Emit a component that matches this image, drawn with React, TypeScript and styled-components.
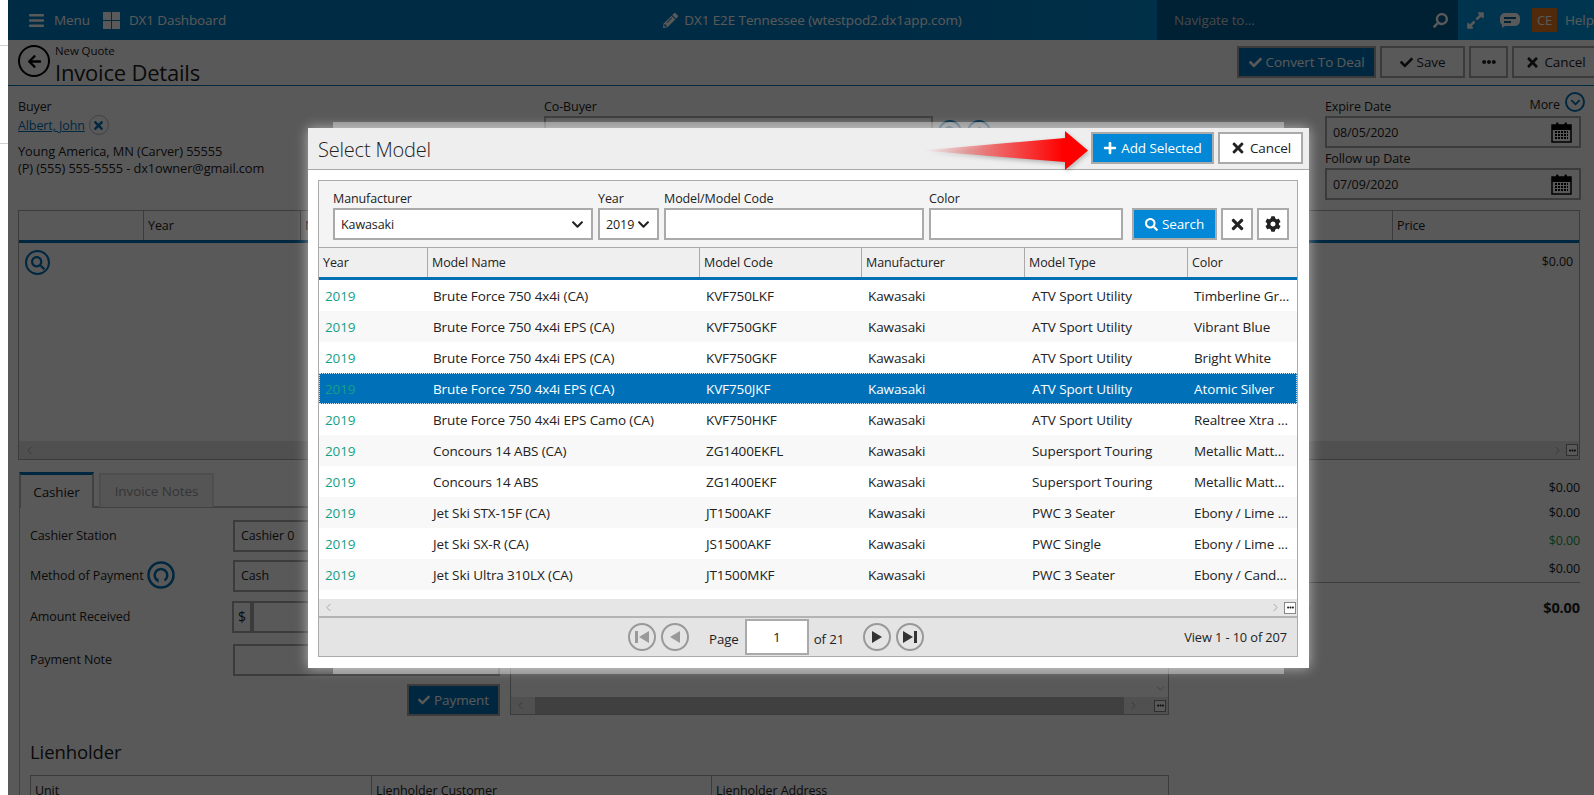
import React from "react";
import styled, { createGlobalStyle } from "styled-components";
import { FaBars, FaPencilAlt, FaSearch, FaExpandAlt, FaCheck, FaTimes, FaPlus, FaCog, FaEllipsisH, FaChevronDown, FaArrowLeft } from "react-icons/fa";
import { ChevronLeft, ChevronRight, ChevronDown } from "lucide-react";

const Global = createGlobalStyle`
  html, body { margin: 0; padding: 0; background: #fff; overflow: hidden; }
  * { box-sizing: border-box; }
  body { font-family: "Open Sans", "Noto Sans", sans-serif; font-size: 12.5px; color: #222; letter-spacing: -0.1px; }
`;

const Shell = styled.div`position: relative; width: 1594px; height: 795px; overflow: hidden; display: flex; background: #fff;`;
const Gutter = styled.div`width: 8px; flex: none; display: flex; flex-direction: column;`;
const GutterCell = styled.div<{ $h: number }>`height: ${p => p.$h}px; border-bottom: 1px solid #d0d0d0;`;
const Page = styled.div`flex: 1; min-width: 0; display: flex; flex-direction: column; background: #fff;`;

const TopBar = styled.header`height: 40px; flex: none; display: flex; align-items: center; color: #fff; background: linear-gradient(90deg, #007cc2 0%, #007cc2 55%, #0098e6 100%); font-size: 13.5px;`;
const TopLeft = styled.div`width: 460px; flex: none; display: flex; align-items: center; padding-left: 20px; gap: 9px;`;
const TopItem = styled.span`margin-right: 4px;`;
const TopCenter = styled.div`flex: 1; display: flex; justify-content: center; align-items: center; gap: 6px; font-size: 13.5px;`;
const NavSearch = styled.div`width: 301px; height: 40px; flex: none; display: flex; align-items: center; justify-content: space-between; padding: 0 10px 0 17px; background: #005f96; color: #ccc;`;
const TopRight = styled.div`width: 136px; flex: none; display: flex; align-items: center; padding-left: 8px; gap: 15px; white-space: nowrap;`;
const Avatar = styled.span`width: 25px; height: 24px; flex: none; display: flex; align-items: center; justify-content: center; background: #e87722; margin-left: -3px; margin-right: -7px; font-size: 13px;`;

const SubHeader = styled.div`height: 46px; flex: none; display: flex; justify-content: space-between; align-items: flex-start; padding: 6px 0 0 10px; border-bottom: 1px solid #0071b8;`;
const TitleWrap = styled.div`display: flex; gap: 5px; margin-top: -1px;`;
const BackCircle = styled.span`width: 32px; height: 32px; border-radius: 50%; border: 2px solid #000; display: flex; align-items: center; justify-content: center; font-size: 15px; color: #000;`;
const Crumb = styled.div`font-size: 11.5px; line-height: 12px;`;
const PageTitle = styled.h1`margin: 1px 0 0; font-size: 22px; font-weight: 400; line-height: 29px; letter-spacing: -0.2px;`;
const Actions = styled.div`display: flex; gap: 4px; margin-right: -5px;`;
const Button = styled.button<{ $primary?: boolean; $w: number; $h?: number }>`
  width: ${p => p.$w}px; height: ${p => p.$h ?? 32}px; flex: none; padding: 0; display: flex; align-items: center; justify-content: center; gap: 4px;
  border: 2px solid #aaa; font: inherit; font-size: 13.5px; letter-spacing: -0.1px;
  background: ${p => (p.$primary ? "#0288d6" : "#fff")}; color: ${p => (p.$primary ? "#fff" : "#222")};
`;
const DimPrimary = styled(Button)`background: #0071b8;`;

const Content = styled.div`flex: 1; display: flex; flex-direction: column; padding: 0 14px 0 10px; min-height: 0;`;
const InfoRow = styled.div`height: 124px; flex: none; display: grid; grid-template-columns: 526px 781px 256px; padding-top: 10px;`;
const InfoCol = styled.div`padding-top: 2px;`;
const Label = styled.div`font-size: 12.5px; line-height: 17px;`;
const BuyerText = styled(Label)`font-size: 12.8px;`;
const BuyerLine = styled.div`display: flex; align-items: center; gap: 4px; height: 22px; margin: -1px 0 7px;`;
const BuyerLink = styled.a`color: #0071b8; text-decoration: underline;`;
const RoundIcon = styled.span<{ $size: number }>`width: ${p => p.$size}px; height: ${p => p.$size}px; flex: none; border-radius: 50%; border: 2px solid #0071b8; color: #0071b8; display: flex; align-items: center; justify-content: center; font-size: ${p => Math.round(p.$size * 0.55)}px;`;
const LightRound = styled(RoundIcon)`border: 1px solid #bbb; font-size: 13px;`;
const CoBuyerInner = styled.div`display: flex; align-items: center; gap: 5px; margin-top: 1px;`;
const TextBox = styled.div<{ $w?: number; $h?: number }>`
  width: ${p => (p.$w ? `${p.$w}px` : "100%")}; height: ${p => p.$h ?? 32}px; flex: none; border: 2px solid #aaa; padding: 0 7px 0 6px; display: flex; align-items: center; justify-content: space-between; background: #fff; font-size: 12.5px;
`;
const DateHead = styled.div`height: 20px; display: flex; justify-content: space-between; align-items: flex-end;`;
const DateHeadLabel = styled(Label)`margin-bottom: 1px;`;
const More = styled.span`display: flex; align-items: flex-start; gap: 5px; margin: 0 -4px 3px 0;`;
const MoreText = styled.span`margin-top: 4px; line-height: 17px;`;
const DateGroup = styled.div`display: flex; flex-direction: column;`;
const DateGap = styled.div`height: 2px;`;
const DateLabel = styled(Label)`margin-bottom: 1px;`;

const BackTable = styled.div<{ $h: number }>`height: ${p => p.$h}px; flex: none; border: 1px solid #aaa; display: flex; flex-direction: column;`;
const BackHead = styled.div`height: 32px; flex: none; display: grid; grid-template-columns: 124px 157px 1fr 187px; border-bottom: 3px solid #0071b8; background: #fff;`;
const BackHeadCell = styled.div`padding: 6px 4px; border-left: 1px solid #aaa; &:first-child { border-left: 0; }`;
const BackBody = styled.div`flex: 1; display: flex; justify-content: space-between; padding: 7px 6px;`;
const BackPrice = styled.span`margin-top: 3px;`;
const SmallBar = styled.div`height: 18px; flex: none; display: flex; justify-content: space-between; align-items: center; background: #e4e4e4; color: #888; padding: 0 1px 0 4px;`;
const BarEnd = styled.span`display: flex; align-items: center; gap: 2px;`;
const TinyBox = styled.span`width: 12px; height: 12px; border: 1px solid #888; background: #fff; color: #222; display: flex; align-items: center; justify-content: center; font-size: 7px;`;

const Lower = styled.div`flex: 1; display: flex; margin-top: 12px; min-height: 0;`;
const LeftCol = styled.div`width: 1150px; flex: none; margin-left: 1px; display: flex; flex-direction: column;`;
const Tabs = styled.div`height: 36px; flex: none; display: flex; gap: 5px; border-bottom: 2px solid #bbb;`;
const Tab = styled.div<{ $active?: boolean }>`
  width: ${p => (p.$active ? 75 : 115)}px; height: ${p => (p.$active ? 36 : 34)}px; margin-top: ${p => (p.$active ? 0 : 1)}px;
  display: flex; align-items: center; justify-content: center; font-size: 13.5px;
  background: ${p => (p.$active ? "#fff" : "#f4f4f4")}; color: ${p => (p.$active ? "#222" : "#999")};
  border: 2px solid ${p => (p.$active ? "#bbb" : "#e0e0e0")}; border-bottom: 0;
  ${p => p.$active && "border-top: 3px solid #0071b8;"}
`;
const Panel = styled.div`flex: 1; border-left: 1px solid #bbb; padding: 12px 0 0 10px;`;
const PanelColumns = styled.div`display: flex; gap: 10px; height: 195px;`;
const FormCol = styled.div`width: 470px; flex: none; display: flex; flex-direction: column;`;
const FormRow = styled.div<{ $mb: number }>`display: flex; align-items: center; height: 31px; margin-bottom: ${p => p.$mb}px; justify-content: space-between;`;
const FormLabel = styled.div`display: flex; align-items: center; gap: 3px; font-size: 12.5px; width: 203px; margin-top: -1px;`;
const FormField = styled.div`flex: 1; display: flex;`;
const Dollar = styled.span`width: 20px; height: 32px; flex: none; border: 2px solid #aaa; display: flex; align-items: center; justify-content: center; font-size: 14px; margin-left: -1px;`;
const PaymentWrap = styled.div`display: flex; justify-content: flex-end; margin-top: 9px;`;
const Notes = styled.div`flex: 1; border: 1px solid #aaa; display: flex; flex-direction: column; justify-content: flex-end;`;
const NotesDown = styled.div`display: flex; justify-content: flex-end; color: #888; padding: 0 1px 2px 0;`;
const NotesBar = styled.div`height: 17px; display: flex; justify-content: space-between; align-items: center; background: #e4e4e4; color: #888; padding: 0 2px 0 3px;`;
const NotesThumb = styled.div`flex: 1; height: 100%; background: #b8b8b8; margin: 0 3px 0 8px;`;
const Heading = styled.h2`margin: 25px 0 0; font-size: 18.5px; font-weight: 400; line-height: 24px;`;
const LienTable = styled.div`margin-top: 11px; height: 40px; border: 1px solid #aaa; display: grid; grid-template-columns: 340px 340px 1fr;`;
const LienCell = styled.div`padding: 6px 4px; border-left: 1px solid #aaa; &:first-child { border-left: 0; }`;
const Totals = styled.div`flex: 1; padding-top: 4px; display: flex; flex-direction: column; align-items: stretch;`;
const Amount = styled.div<{ $h: number; $c?: string }>`height: ${p => p.$h}px; display: flex; align-items: center; justify-content: flex-end; color: ${p => p.$c ?? "#222"};`;
const TotalRule = styled.div`height: 1px; background: #aaa;`;
const BalanceRow = styled.div`display: flex; justify-content: space-between; font-weight: 700; font-size: 14.5px; line-height: 20px; padding: 15px 0 0 52px;`;

const Backdrop = styled.div`position: absolute; left: 8px; right: 0; top: 0; bottom: 0; background: rgba(0,0,0,0.65);`;
const Modal = styled.div`position: absolute; left: 308px; top: 128px; width: 1001px; height: 540px; background: #fff; box-shadow: 0 0 12px rgba(255,255,255,0.55); display: flex; flex-direction: column;
  &::before { content: ""; position: absolute; left: 25px; right: 25px; top: -6px; bottom: -6px; background: rgba(255,255,255,.35); z-index: -1; }
`;
const ModalWrap = styled.div`position: absolute; left: 0; top: 0; width: 100%; height: 100%; z-index: 1; isolation: isolate;`;
const ModalHead = styled.div`height: 42px; flex: none; display: flex; justify-content: space-between; align-items: center; padding: 0 6px 2px 10px; background: #eee; border-bottom: 1px solid #aaa;`;
const ModalTitle = styled.div`font-size: 20px; font-weight: 300; letter-spacing: -0.2px; color: #222; margin-top: 4px;`;
const ModalActions = styled.div`display: flex; gap: 4px;`;
const Arrow = styled.svg`position: absolute; left: 614px; top: 3px; overflow: visible; filter: drop-shadow(1px 2px 2px rgba(0,0,0,.25));`;
const ModalBody = styled.div`flex: 1; margin: 10px 11px 11px 10px; border: 1px solid #aaa; display: flex; flex-direction: column; min-height: 0;`;
const Filters = styled.div`height: 66px; flex: none; background: #f4f4f4; display: flex; gap: 5px; padding: 7px 0 7px 14px; align-items: flex-end;`;
const FilterField = styled.div<{ $w: number }>`width: ${p => p.$w}px; flex: none; display: flex; flex-direction: column;`;
const FilterLabel = styled(Label)`margin-bottom: 1px;`;
const FilterBtns = styled.div`display: flex; gap: 4px; margin-left: 4px;`;
const GridHead = styled.div`height: 33px; flex: none; display: grid; grid-template-columns: 108px 272px 162px 163px 163px 1fr; background: #efefef; border-top: 1px solid #aaa; border-bottom: 3px solid #006fb3;`;
const HeadCell = styled.div`display: flex; align-items: center; padding-left: 4px; border-left: 1px solid #aaa; &:first-child { border-left: 0; }`;
const Rows = styled.div`flex: 1; background: #fff;`;
const Row = styled.div<{ $sel?: boolean; $odd?: boolean }>`
  height: 31px; padding-top: 1px; display: grid; grid-template-columns: 108px 273px 162px 164px 162px 1fr; align-items: center; font-size: 13.5px;
  background: ${p => (p.$sel ? "#0071b8" : p.$odd ? "#f8f8f8" : "#fff")};
  color: ${p => (p.$sel ? "#fff" : "#222")};
  ${p => p.$sel && "outline: 1px dotted #cfe6f5; outline-offset: -1px;"}
`;
const Cell = styled.div`padding-left: 6px; white-space: nowrap; overflow: hidden;`;
const YearCell = styled(Cell)`color: #16a085;`;
const HScroll = styled.div`height: 19px; flex: none; background: #e6e6e6; display: flex; justify-content: space-between; align-items: center; padding: 0 1px 0 3px; color: #888; border-bottom: 2px solid #b4b4b4;`;
const Pager = styled.div`height: 38px; flex: none; background: #e4e4e4; display: flex; align-items: center; padding-left: 309px;`;
const PageInput = styled.div`width: 64px; height: 36px; margin: 0 5px 0 6px; background: #fff; border: 2px solid #aaa; display: flex; align-items: center; justify-content: center; font-size: 13.5px;`;
const PagerBtn = styled.svg`display: block; margin-right: 5px;`;
const PagerText = styled.span`margin-top: 3px; font-size: 13.3px;`;
const ViewText = styled.div`margin-left: auto; padding-right: 10px; font-size: 12.8px;`;
const Spacer = styled.div<{ $w: number }>`width: ${p => p.$w}px; flex: none;`;

const Tile = () => (
  <svg width="17" height="17" viewBox="0 0 17 17" fill="currentColor"><rect width="8" height="8" /><rect x="9" width="8" height="8" /><rect y="9" width="8" height="8" /><rect x="9" y="9" width="8" height="8" /></svg>
);
const Chat = () => (
  <svg width="20" height="15" viewBox="0 0 20 15"><path d="M5 0h10a5 5 0 0 1 5 5v3a5 5 0 0 1-5 5H5l-3 2v-3a5 5 0 0 1-2-4V5a5 5 0 0 1 5-5z" fill="#fff" /><rect x="4" y="4" width="12" height="2" fill="#005f96" /><rect x="4" y="8" width="7" height="2" fill="#005f96" /></svg>
);
const Calendar = () => (
  <svg width="21" height="21" viewBox="0 0 21 21"><rect x="1" y="3" width="19" height="17" fill="#fff" stroke="#000" strokeWidth="1.5" /><rect x="1" y="3" width="19" height="5" fill="#000" /><rect x="5" y="0.500" width="2.500" height="5" rx="1" fill="#000" /><rect x="13.500" y="0.500" width="2.500" height="5" rx="1" fill="#000" /><path d="M4 10h13M4 13h13M4 16h13" stroke="#000" strokeWidth="2" strokeDasharray="2 1" /></svg>
);
const Reload = () => (
  <svg width="28" height="28" viewBox="0 0 28 28" fill="none"><circle cx="14" cy="14" r="12.500" stroke="#0071b8" strokeWidth="2.500" /><path d="M10.500 19.500A6.300 6.300 0 1 1 17.500 19.500" stroke="#0071b8" strokeWidth="2.500" /><path d="M7 17.500l4.500 0 0 4.500z" fill="#0071b8" /></svg>
);
const PagerIcon = ({ dir, bar, on }: { dir: "l" | "r"; bar?: boolean; on?: boolean }) => {
  const c = on ? "#333" : "#999";
  const tri = dir === "l" ? (bar ? "M21 8v12l-10-6z" : "M19 8v12l-10-6z") : bar ? "M7 8v12l10-6z" : "M9 8v12l10-6z";
  const b = dir === "l" ? "M7 8h3v12H7z" : "M18 8h3v12h-3z";
  return (
    <PagerBtn width="28" height="28" viewBox="0 0 28 28">
      <circle cx="14" cy="14" r="13" fill="none" stroke="#999" strokeWidth="2" />
      <path d={tri} fill={c} />
      {bar && <path d={b} fill={c} />}
    </PagerBtn>
  );
};

const rows = [
  ["Brute Force 750 4x4i (CA)", "KVF750LKF", "ATV Sport Utility", "Timberline Gr..."],
  ["Brute Force 750 4x4i EPS (CA)", "KVF750GKF", "ATV Sport Utility", "Vibrant Blue"],
  ["Brute Force 750 4x4i EPS (CA)", "KVF750GKF", "ATV Sport Utility", "Bright White"],
  ["Brute Force 750 4x4i EPS (CA)", "KVF750JKF", "ATV Sport Utility", "Atomic Silver"],
  ["Brute Force 750 4x4i EPS Camo (CA)", "KVF750HKF", "ATV Sport Utility", "Realtree Xtra ..."],
  ["Concours 14 ABS (CA)", "ZG1400EKFL", "Supersport Touring", "Metallic Matt..."],
  ["Concours 14 ABS", "ZG1400EKF", "Supersport Touring", "Metallic Matt..."],
  ["Jet Ski STX-15F (CA)", "JT1500AKF", "PWC 3 Seater", "Ebony / Lime ..."],
  ["Jet Ski SX-R (CA)", "JS1500AKF", "PWC Single", "Ebony / Lime ..."],
  ["Jet Ski Ultra 310LX (CA)", "JT1500MKF", "PWC 3 Seater", "Ebony / Cand..."],
];

const Thin = { size: 13, strokeWidth: 1.2 };

export default function App() {
  return (
    <Shell>
      <Global />
      <Gutter>
        <GutterCell $h={46} />
        <GutterCell $h={98} />
      </Gutter>
      <Page>
        <TopBar>
          <TopLeft>
            <FaBars size={17} />
            <TopItem>Menu</TopItem>
            <Tile />
            <span>DX1 Dashboard</span>
          </TopLeft>
          <TopCenter>
            <FaPencilAlt size={15} />
            <span>DX1 E2E Tennessee (wtestpod2.dx1app.com)</span>
          </TopCenter>
          <NavSearch>
            <span>Navigate to...</span>
            <FaSearch size={15} color="#fff" style={{ transform: "scaleX(-1)" }} />
          </NavSearch>
          <TopRight>
            <FaExpandAlt size={19} />
            <Chat />
            <Avatar>CE</Avatar>
            <span>Help</span>
          </TopRight>
        </TopBar>
        <SubHeader>
          <TitleWrap>
            <BackCircle><FaArrowLeft /></BackCircle>
            <div>
              <Crumb>New Quote</Crumb>
              <PageTitle>Invoice Details</PageTitle>
            </div>
          </TitleWrap>
          <Actions>
            <DimPrimary $primary $w={139}><FaCheck size={13} />Convert To Deal</DimPrimary>
            <Button $w={85}><FaCheck size={13} />Save</Button>
            <Button $w={39}><FaEllipsisH size={14} /></Button>
            <Button $w={87}><FaTimes size={15} />Cancel</Button>
          </Actions>
        </SubHeader>
        <Content>
          <InfoRow>
            <InfoCol>
              <Label>Buyer</Label>
              <BuyerLine><BuyerLink>Albert, John</BuyerLink><LightRound $size={20}><FaTimes /></LightRound></BuyerLine>
              <BuyerText>Young America, MN (Carver) 55555</BuyerText>
              <BuyerText>(P) (555) 555-5555 - dx1owner@gmail.com</BuyerText>
            </InfoCol>
            <InfoCol>
              <Label>Co-Buyer</Label>
              <CoBuyerInner>
                <TextBox $w={389} />
                <RoundIcon $size={24}><FaSearch /></RoundIcon>
                <RoundIcon $size={24}><FaPlus /></RoundIcon>
              </CoBuyerInner>
            </InfoCol>
            <DateGroup>
              <DateHead>
                <DateHeadLabel>Expire Date</DateHeadLabel>
                <More><MoreText>More</MoreText><RoundIcon $size={20}><FaChevronDown /></RoundIcon></More>
              </DateHead>
              <TextBox>08/05/2020<Calendar /></TextBox>
              <DateGap />
              <DateLabel>Follow up Date</DateLabel>
              <TextBox>07/09/2020<Calendar /></TextBox>
            </DateGroup>
          </InfoRow>
          <BackTable $h={250}>
            <BackHead>
              <BackHeadCell />
              <BackHeadCell>Year</BackHeadCell>
              <BackHeadCell>Name</BackHeadCell>
              <BackHeadCell>Price</BackHeadCell>
            </BackHead>
            <BackBody>
              <RoundIcon $size={25}><FaSearch /></RoundIcon>
              <BackPrice>$0.00</BackPrice>
            </BackBody>
            <SmallBar>
              <ChevronLeft {...Thin} />
              <BarEnd><ChevronRight {...Thin} /><TinyBox><FaEllipsisH /></TinyBox></BarEnd>
            </SmallBar>
          </BackTable>
          <Lower>
            <LeftCol>
              <Tabs>
                <Tab $active>Cashier</Tab>
                <Tab>Invoice Notes</Tab>
              </Tabs>
              <Panel>
                <PanelColumns>
                  <FormCol>
                    <FormRow $mb={9}><FormLabel>Cashier Station</FormLabel><FormField><TextBox>Cashier 0</TextBox></FormField></FormRow>
                    <FormRow $mb={10}><FormLabel>Method of Payment <Reload /></FormLabel><FormField><TextBox>Cash</TextBox></FormField></FormRow>
                    <FormRow $mb={12}><FormLabel>Amount Received</FormLabel><FormField><Dollar>$</Dollar><TextBox $w={248} /></FormField></FormRow>
                    <FormRow $mb={0}><FormLabel>Payment Note</FormLabel><FormField><TextBox /></FormField></FormRow>
                    <PaymentWrap><DimPrimary $primary $w={93} $h={32}><FaCheck size={12} />Payment</DimPrimary></PaymentWrap>
                  </FormCol>
                  <Notes>
                    <NotesDown><ChevronDown {...Thin} /></NotesDown>
                    <NotesBar>
                      <ChevronLeft {...Thin} /><NotesThumb /><ChevronRight {...Thin} /><Spacer $w={14} /><TinyBox><FaEllipsisH /></TinyBox>
                    </NotesBar>
                  </Notes>
                </PanelColumns>
                <Heading>Lienholder</Heading>
                <LienTable>
                  <LienCell>Unit</LienCell>
                  <LienCell>Lienholder Customer</LienCell>
                  <LienCell>Lienholder Address</LienCell>
                </LienTable>
              </Panel>
            </LeftCol>
            <Totals>
              <Amount $h={22}>$0.00</Amount>
              <Amount $h={28}>$0.00</Amount>
              <Amount $h={28} $c="#1f9d3a">$0.00</Amount>
              <Amount $h={28}>$0.00</Amount>
              <TotalRule />
              <BalanceRow><span>Balance Due</span><span>$0.00</span></BalanceRow>
            </Totals>
          </Lower>
        </Content>
      </Page>
      <Backdrop />
      <ModalWrap>
        <Modal>
          <ModalHead>
            <ModalTitle>Select Model</ModalTitle>
            <ModalActions>
              <Button $primary $w={123} $h={32}><FaPlus size={14} />Add Selected</Button>
              <Button $w={85} $h={32}><FaTimes size={16} />Cancel</Button>
            </ModalActions>
          </ModalHead>
          <Arrow width="166" height="39" viewBox="0 0 166 39">
            <defs>
              <linearGradient id="arrowFill" x1="0" x2="1" y1="0" y2="0">
                <stop offset="0" stopColor="#e88" stopOpacity="0" />
                <stop offset="0.45" stopColor="#e66" />
                <stop offset="0.85" stopColor="#f00" />
              </linearGradient>
            </defs>
            <path d="M0 19.500L143 7V0L166 19.500 143 39V31z" fill="url(#arrowFill)" />
          </Arrow>
          <ModalBody>
            <Filters>
              <FilterField $w={260}><FilterLabel>Manufacturer</FilterLabel><TextBox $h={32}>Kawasaki<FaChevronDown size={13} /></TextBox></FilterField>
              <FilterField $w={61}><FilterLabel>Year</FilterLabel><TextBox $h={32}>2019<FaChevronDown size={13} /></TextBox></FilterField>
              <FilterField $w={260}><FilterLabel>Model/Model Code</FilterLabel><TextBox $h={32} /></FilterField>
              <FilterField $w={194}><FilterLabel>Color</FilterLabel><TextBox $h={32} /></FilterField>
              <FilterBtns>
                <Button $primary $w={85} $h={32}><FaSearch size={13} />Search</Button>
                <Button $w={32} $h={32}><FaTimes size={17} /></Button>
                <Button $w={32} $h={32}><FaCog size={16} /></Button>
              </FilterBtns>
            </Filters>
            <GridHead>
              <HeadCell>Year</HeadCell>
              <HeadCell>Model Name</HeadCell>
              <HeadCell>Model Code</HeadCell>
              <HeadCell>Manufacturer</HeadCell>
              <HeadCell>Model Type</HeadCell>
              <HeadCell>Color</HeadCell>
            </GridHead>
            <Rows>
              {rows.map((r, i) => (
                <Row key={i} $odd={i % 2 === 1} $sel={i === 3}>
                  <YearCell>2019</YearCell>
                  <Cell>{r[0]}</Cell>
                  <Cell>{r[1]}</Cell>
                  <Cell>Kawasaki</Cell>
                  <Cell>{r[2]}</Cell>
                  <Cell>{r[3]}</Cell>
                </Row>
              ))}
            </Rows>
            <HScroll>
              <ChevronLeft {...Thin} />
              <BarEnd><ChevronRight {...Thin} /><TinyBox><FaEllipsisH /></TinyBox></BarEnd>
            </HScroll>
            <Pager>
              <PagerIcon dir="l" bar />
              <PagerIcon dir="l" />
              <Spacer $w={15} />
              <PagerText>Page</PagerText>
              <PageInput>1</PageInput>
              <PagerText>of 21</PagerText>
              <Spacer $w={19} />
              <PagerIcon dir="r" on />
              <PagerIcon dir="r" bar on />
              <ViewText>View 1 - 10 of 207</ViewText>
            </Pager>
          </ModalBody>
        </Modal>
      </ModalWrap>
    </Shell>
  );
}
